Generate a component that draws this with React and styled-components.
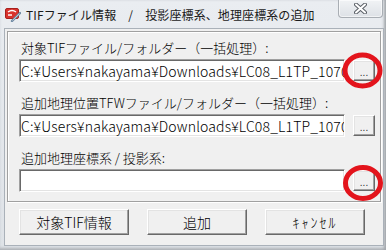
import React from 'react';
import styled, { createGlobalStyle } from 'styled-components';

const GlobalStyle = createGlobalStyle`
  html, body {
    margin: 0;
    padding: 0;
    background: #dfe3e8;
  }
  body {
    font-family: "Noto Sans CJK JP", "Noto Sans", sans-serif;
  }
`;

const Window = styled.div`
  position: relative;
  width: 386px;
  height: 250px;
  display: flex;
  flex-direction: column;
  background: linear-gradient(#eaedf1, #dee2e7);
  box-shadow:
    inset -3px 0 3px -1px #a2a6ab,
    inset 0 -3px 3px -1px #b0b4b9;
  overflow: hidden;
`;

const TitleBar = styled.div`
  height: 28px;
  display: flex;
  align-items: center;
  padding-left: 5px;
  flex-shrink: 0;
`;

const Title = styled.span`
  margin-left: 5px;
  font-size: 12px;
  color: #1a1a1a;
  white-space: nowrap;
  letter-spacing: 0.1px;
`;

const CloseButton = styled.div`
  margin-left: auto;
  margin-right: 3px;
  align-self: flex-start;
  width: 45px;
  height: 18px;
  box-sizing: border-box;
  border: 1px solid #a9aeb4;
  border-top: none;
  border-radius: 0 0 4px 4px;
  background: linear-gradient(#f1f3f5, #dde1e6);
  box-shadow: inset 0 0 0 1px rgba(255, 255, 255, 0.6);
  display: flex;
  align-items: center;
  justify-content: center;
`;

const Client = styled.div`
  flex: 1;
  margin: 0 2px 4px 4px;
  border: 1px solid #aab1b9;
  background: #f0f0f0;
  padding: 2px 2px 0;
  display: flex;
  flex-direction: column;
`;

const GroupBox = styled.div`
  border: 1px solid #a0a0a0;
  box-shadow: inset 1px 1px 0 #fff, 1px 1px 0 #fff;
  padding: 8px 5px 9px 11px;
  display: flex;
  flex-direction: column;
`;

const Field = styled.div`
  display: flex;
  flex-direction: column;
  margin-top: ${(p) => (p.first ? 0 : 13)}px;
`;

const Label = styled.div`
  height: 16px;
  line-height: 16px;
  font-size: 13px;
  font-weight: 300;
  color: #000;
  padding-left: 2px;
  margin-bottom: 3px;
  white-space: nowrap;
`;

const Row = styled.div`
  display: flex;
  align-items: center;
  gap: 8px;
`;

const PathInput = styled.input`
  flex: 1;
  min-width: 0;
  height: 23px;
  box-sizing: border-box;
  margin: 0;
  padding: 0 0 0 1px;
  border: 1px solid;
  border-color: #a0a0a0 #fff #fff #a0a0a0;
  box-shadow:
    inset 1px 1px 0 #696969,
    inset -1px -1px 0 #e3e3e3;
  background: #fff;
  font-family: "Noto Sans CJK JP", sans-serif;
  font-size: 14px;
  font-weight: 300;
  letter-spacing: 0.15px;
  color: #000;
  outline: none;
`;

const BrowseButton = styled.button`
  width: 22px;
  height: 21px;
  flex-shrink: 0;
  box-sizing: border-box;
  margin: 0;
  padding: 4px 0 0;
  border: 1px solid;
  border-color: #fff #696969 #696969 #fff;
  box-shadow:
    inset -1px -1px 0 #a0a0a0,
    inset 1px 1px 0 #e3e3e3;
  background: #f0f0f0;
  font-family: "Liberation Sans", sans-serif;
  font-size: 10px;
  color: #333;
  line-height: 1;
`;

const ActionRow = styled.div`
  display: flex;
  gap: 18px;
  padding: 7px 0 0 12px;
`;

const ActionButton = styled.button`
  width: ${(p) => p.width}px;
  height: 26px;
  box-sizing: border-box;
  margin: 0;
  padding: 0;
  border: 1px solid;
  border-color: #fff #696969 #696969 #fff;
  box-shadow:
    inset -1px -1px 0 #a0a0a0,
    inset 1px 1px 0 #e3e3e3;
  background: #f0f0f0;
  font-family: "Noto Sans CJK JP", sans-serif;
  font-size: 14px;
  font-weight: 300;
  color: #000;
  letter-spacing: ${(p) => p.spacing || 0}px;
`;

const Marks = styled.svg`
  position: absolute;
  left: 0;
  top: 0;
  pointer-events: none;
`;

const AppIcon = () => (
  <svg width="16" height="16" viewBox="0 0 16 16">
    <rect x="0.5" y="2.5" width="13" height="10" rx="1.5" fill="#d8322d" stroke="#a8201c" />
    <path d="M3 6 Q7 3 11 6" stroke="#fff" strokeWidth="1.4" fill="none" />
    <rect x="3" y="8" width="4" height="2" fill="#f7c5c2" />
    <path d="M7 15 L15 7" stroke="#6f8aa3" strokeWidth="2.4" strokeLinecap="round" />
    <path d="M7.5 14.5 L14.5 7.5" stroke="#c9d6e2" strokeWidth="0.8" />
  </svg>
);

const CloseGlyph = () => (
  <svg width="13" height="11" viewBox="0 0 13 11">
    <path d="M2 1.5 L11 9.5 M11 1.5 L2 9.5" stroke="#5a5f66" strokeWidth="4" strokeLinecap="round" />
    <path d="M2 1.5 L11 9.5 M11 1.5 L2 9.5" stroke="#fff" strokeWidth="2" strokeLinecap="round" />
  </svg>
);

const fields = [
  {
    label: '対象TIFファイル/フォルダー（一括処理）:',
    value: 'C:¥Users¥nakayama¥Downloads¥LC08_L1TP_107035_20180618_20180703_01_T1',
  },
  {
    label: '追加地理位置TFWファイル/フォルダー（一括処理）:',
    value: 'C:¥Users¥nakayama¥Downloads¥LC08_L1TP_107035_20180618_20180703_01_T1',
  },
  {
    label: '追加地理座標系 / 投影系:',
    value: '',
  },
];

const App = () => {
  return (
    <>
      <GlobalStyle />
      <Window>
        <TitleBar>
          <AppIcon />
          <Title>TIFファイル情報　/　投影座標系、地理座標系の追加</Title>
          <CloseButton>
            <CloseGlyph />
          </CloseButton>
        </TitleBar>
        <Client>
          <GroupBox>
            {fields.map((f, i) => (
              <Field key={f.label} first={i === 0}>
                <Label>{f.label}</Label>
                <Row>
                  <PathInput readOnly value={f.value} />
                  <BrowseButton>...</BrowseButton>
                </Row>
              </Field>
            ))}
          </GroupBox>
          <ActionRow>
            <ActionButton width={110}>対象TIF情報</ActionButton>
            <ActionButton width={100}>追加</ActionButton>
            <ActionButton width={100} spacing={2}>ｷｬﾝｾﾙ</ActionButton>
          </ActionRow>
        </Client>
        <Marks width="386" height="250">
          <ellipse cx="362.5" cy="70.5" rx="17.5" ry="15.5" fill="none" stroke="#e3141c" strokeWidth="5" />
          <ellipse cx="363" cy="183" rx="17.5" ry="15.5" fill="none" stroke="#e3141c" strokeWidth="5" />
        </Marks>
      </Window>
    </>
  );
};

export default App;
